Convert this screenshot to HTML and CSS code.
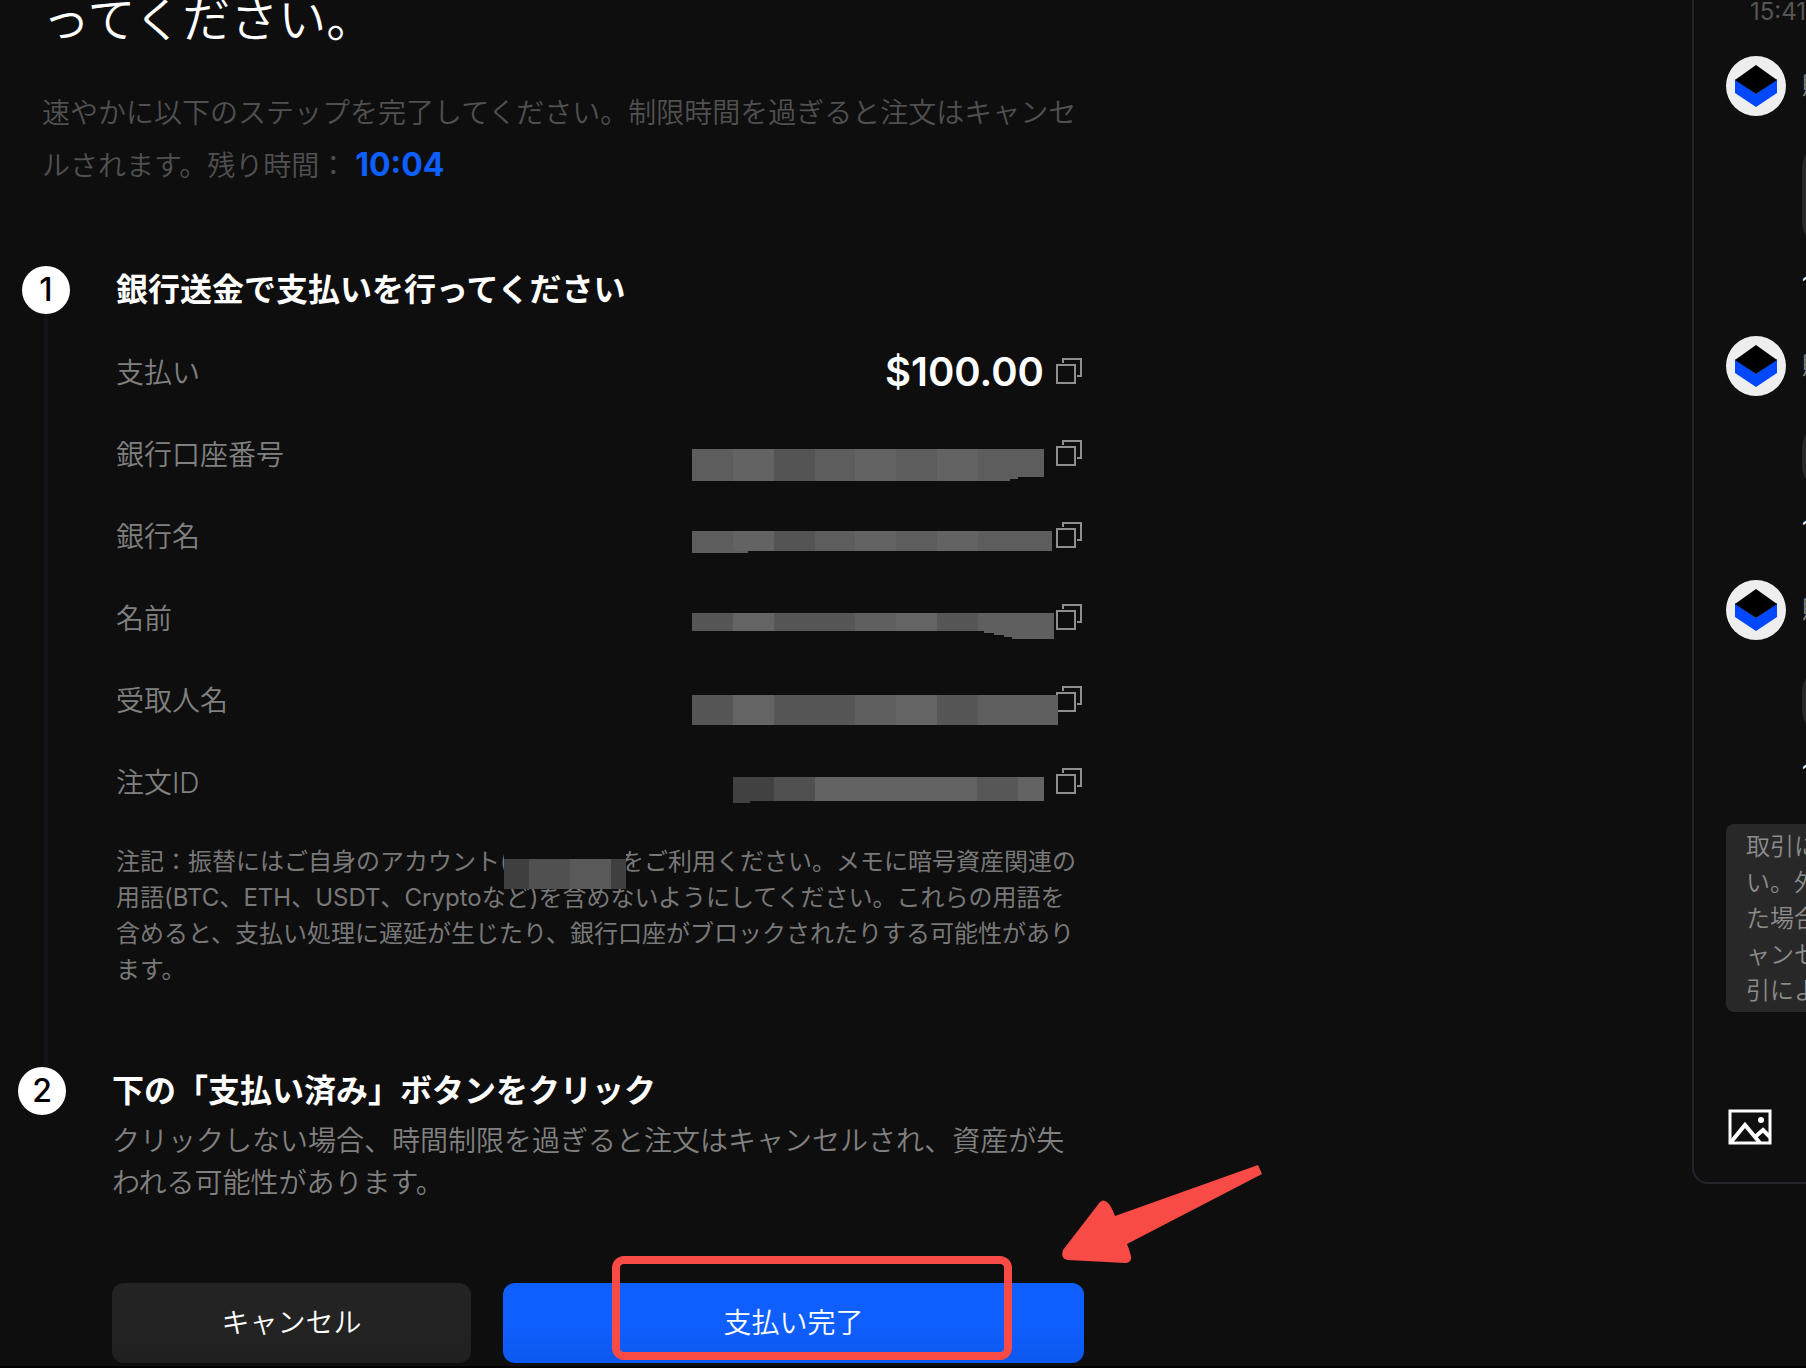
FILE: index.html
```html
<!DOCTYPE html>
<html lang="ja">
<head>
    <meta charset="UTF-8">
    <meta name="viewport" content="width=device-width, initial-scale=1.0">
    <title>注文の支払い</title>
    <link rel="stylesheet" href="styles.css">
</head>
<body>
    <!-- Shared icons -->
    <svg class="sprite" aria-hidden="true">
        <symbol id="icon-copy" viewBox="0 0 26 26">
            <path d="M1 7h18v18H1zM7 5V1h18v17h-4" fill="none" stroke="#8f8f8f" stroke-width="2"/>
        </symbol>
        <symbol id="icon-avatar" viewBox="0 0 60 60">
            <circle cx="30" cy="30" r="30" fill="#eeeeee"/>
            <path d="M9 23l21 15 21-15v14L30 51 9 37z" fill="#0048ff"/>
            <path d="M30 9l21 15-21 14L9 24z" fill="#000"/>
        </symbol>
    </svg>

    <div class="page">
        <main class="order">
            <header class="order-header">
                <h1>ってください。</h1>
                <p>速やかに以下のステップを完了してください。制限時間を過ぎると注文はキャンセルされます。残り時間：<strong class="countdown">10:04</strong></p>
            </header>

            <section class="step step-pay">
                <div class="rail">
                    <span class="badge">1</span>
                    <span class="line"></span>
                </div>
                <div class="step-body">
                    <h2>銀行送金で支払いを行ってください</h2>
                    <dl class="details">
                        <div class="row">
                            <dt>支払い</dt>
                            <dd>
                                <span class="amount">$100.00</span>
                                <button class="copy" type="button" aria-label="支払いをコピー"><svg><use href="#icon-copy"/></svg></button>
                            </dd>
                        </div>
                        <div class="row">
                            <dt>銀行口座番号</dt>
                            <dd>
                                <svg class="mask" viewBox="0 0 352 60">
                                    <path d="M0 26h352v28h-26v2h-8v2H0z" fill="#5d5d5d"/>
                                    <path d="M41 26h41v32H41zM163 26h41v32h-41zM245 26h41v32h-41z" fill="#636363"/>
                                    <path d="M82 26h41v32H82z" fill="#545454"/>
                                </svg>
                                <button class="copy" type="button" aria-label="銀行口座番号をコピー"><svg><use href="#icon-copy"/></svg></button>
                            </dd>
                        </div>
                        <div class="row">
                            <dt>銀行名</dt>
                            <dd>
                                <svg class="mask" viewBox="0 0 352 60">
                                    <path d="M0 26h360v20H56v2H0z" fill="#5d5d5d"/>
                                    <path d="M41 26h41v20H41zM163 26h41v20h-41zM245 26h41v20h-41z" fill="#636363"/>
                                    <path d="M82 26h41v20H82z" fill="#545454"/>
                                </svg>
                                <button class="copy" type="button" aria-label="銀行名をコピー"><svg><use href="#icon-copy"/></svg></button>
                            </dd>
                        </div>
                        <div class="row">
                            <dt>名前</dt>
                            <dd>
                                <svg class="mask" viewBox="0 0 352 60">
                                    <path d="M0 26h362v26h-42v-2h-8v-2h-10v-2h-10v-2H0z" fill="#5f5f5f"/>
                                    <path d="M0 26h41v18H0zM82 26h81v18H82zM245 26h41v18h-41z" fill="#565656"/>
                                    <path d="M41 26h41v18H41zM204 26h41v18h-41z" fill="#646464"/>
                                </svg>
                                <button class="copy" type="button" aria-label="名前をコピー"><svg><use href="#icon-copy"/></svg></button>
                            </dd>
                        </div>
                        <div class="row">
                            <dt>受取人名</dt>
                            <dd>
                                <svg class="mask" viewBox="0 0 352 60">
                                    <path d="M0 26h366v30H0z" fill="#5f5f5f"/>
                                    <path d="M0 26h41v30H0zM82 26h81v30H82zM245 26h41v30h-41z" fill="#565656"/>
                                    <path d="M41 26h41v30H41zM204 26h41v30h-41z" fill="#646464"/>
                                </svg>
                                <button class="copy" type="button" aria-label="受取人名をコピー"><svg><use href="#icon-copy"/></svg></button>
                            </dd>
                        </div>
                        <div class="row">
                            <dt>注文ID</dt>
                            <dd>
                                <svg class="mask" viewBox="0 0 352 60">
                                    <path d="M41 26h311v24H58v2H41z" fill="#636363"/>
                                    <path d="M41 26h41v24H58v2H41z" fill="#414141"/>
                                    <path d="M82 26h41v24H82z" fill="#505050"/>
                                    <path d="M285 26h41v24h-41z" fill="#575757"/>
                                </svg>
                                <button class="copy" type="button" aria-label="注文IDをコピー"><svg><use href="#icon-copy"/></svg></button>
                            </dd>
                        </div>
                    </dl>
                    <p class="note">注記：振替にはご自身のアカウント<span class="hidden-name">(<svg viewBox="0 0 122 44"><path d="M0 0h122v14H0z" fill="#0e0e0e"/><path d="M0 14h122v30H0z" fill="#404040"/><path d="M25 14h82v30H25z" fill="#505050"/><path d="M66 14h41v30H66z" fill="#595959"/></svg></span>をご利用ください。メモに暗号資産関連の用語(BTC、ETH、USDT、Cryptoなど)を含めないようにしてください。これらの用語を含めると、支払い処理に遅延が生じたり、銀行口座がブロックされたりする可能性があります。</p>
                </div>
            </section>

            <section class="step step-confirm">
                <div class="rail">
                    <span class="badge">2</span>
                </div>
                <div class="step-body">
                    <h2>下の「支払い済み」ボタンをクリック</h2>
                    <p class="description">クリックしない場合、時間制限を過ぎると注文はキャンセルされ、資産が失われる可能性があります。</p>
                    <div class="actions">
                        <button class="btn btn-cancel" type="button">キャンセル</button>
                        <div class="primary">
                            <button class="btn btn-done" type="button">支払い完了</button>
                            <span class="highlight"></span>
                            <svg class="arrow" viewBox="0 0 200 98">
                                <path d="M1 85L38 37Q41 34 45 37Q49 40 53 51L196 0L200 9L65 79Q70 92 69 94Q68 98 63 98L6 95Q-2 94 1 85z" fill="#f84b46"/>
                            </svg>
                        </div>
                    </div>
                </div>
            </section>
        </main>

        <aside class="chat">
            <div class="chat-inner">
                <time class="chat-date">15:41</time>

                <article class="message">
                    <svg class="avatar"><use href="#icon-avatar"/></svg>
                    <div class="message-body">
                        <div class="name">販売者</div>
                        <div class="bubble bubble-tall"></div>
                        <time>15:41</time>
                    </div>
                </article>
                <article class="message">
                    <svg class="avatar"><use href="#icon-avatar"/></svg>
                    <div class="message-body">
                        <div class="name">販売者</div>
                        <div class="bubble"></div>
                        <time>15:41</time>
                    </div>
                </article>
                <article class="message">
                    <svg class="avatar"><use href="#icon-avatar"/></svg>
                    <div class="message-body">
                        <div class="name">販売者</div>
                        <div class="bubble"></div>
                        <time>15:41</time>
                    </div>
                </article>

                <p class="notice">取引に<br>い。外<br>た場合<br>ャンセ<br>引によ</p>

                <button class="attach" type="button" aria-label="画像を送信">
                    <svg viewBox="0 0 44 36" fill="none" stroke="#fff" stroke-width="3">
                        <path d="M2 2h40v32H2z"/>
                        <path d="M3 33L17 16l15 18M27 28l8-7 7 7" stroke-width="4"/>
                        <circle cx="33" cy="11" r="3" fill="#fff" stroke="none"/>
                    </svg>
                </button>
            </div>
        </aside>
    </div>
</body>
</html>
```
FILE: styles.css
```css
* {
    margin: 0;
    padding: 0;
    box-sizing: border-box;
}

body {
    font-family: Inter, "Noto Sans CJK JP", sans-serif;
    background: #0e0e0e;
    color: #fff;
    overflow-x: hidden;
}

button {
    font: inherit;
    color: inherit;
    border: none;
    background: none;
    cursor: pointer;
}

.sprite {
    position: absolute;
    width: 0;
    height: 0;
}

.page {
    display: flex;
    justify-content: space-between;
    align-items: flex-start;
    min-height: 100vh;
    border-bottom: 2px solid #000;
}

.order {
    flex: 1;
    max-width: 1084px;
}

/* Header */
.order-header {
    padding-left: 42px;
    margin-bottom: 73px;
}

.order-header h1 {
    font-size: 48px;
    font-weight: 350;
    line-height: 40px;
    margin-bottom: 47px;
}

.order-header p {
    font-size: 28px;
    font-weight: 350;
    line-height: 53px;
    color: #505050;
}

.countdown {
    margin-left: 8px;
    font-size: 32px;
    font-weight: 700;
    line-height: 1;
    color: #0f5fff;
}

/* Steps */
.step {
    display: grid;
    grid-template-columns: 48px minmax(0, 1fr);
    gap: 46px;
}

.step-pay {
    padding: 0 2px 0 22px;
}

.step-pay .step-body {
    padding-bottom: 79px;
}

.step-confirm {
    padding-left: 18px;
}

.rail {
    display: flex;
    flex-direction: column;
    align-items: center;
}

.badge {
    width: 48px;
    height: 48px;
    border-radius: 50%;
    background: #fff;
    color: #000;
    font-size: 32px;
    font-weight: 500;
    line-height: 48px;
    text-align: center;
}

.line {
    flex: 1;
    width: 4px;
    background: #131418;
}

.step h2 {
    font-size: 32px;
    font-weight: 700;
    line-height: 48px;
}

.details {
    margin-top: 16px;
}

.row {
    display: flex;
    justify-content: space-between;
    align-items: center;
    height: 82px;
    font-size: 28px;
    font-weight: 350;
}

.row dt {
    color: #808080;
}

.row dd {
    display: flex;
    align-items: center;
    gap: 12px;
}

.amount {
    font-size: 40px;
    font-weight: 600;
}

.copy,
.copy svg {
    display: block;
    width: 26px;
    height: 26px;
}

/* Pixelated cover over the private values */
.mask {
    position: relative;
    z-index: 1;
    width: 352px;
    height: 60px;
    overflow: visible;
}

.note {
    margin-top: 22px;
    font-size: 24px;
    font-weight: 400;
    line-height: 36px;
    color: #787878;
}

.hidden-name {
    display: inline-block;
    position: relative;
    width: 120px;
}

.hidden-name svg {
    position: absolute;
    top: 1px;
    left: 4px;
    width: 122px;
    height: 44px;
}

.description {
    margin-top: 5px;
    font-size: 28px;
    font-weight: 350;
    line-height: 42px;
    color: #808080;
}

/* Buttons */
.actions {
    display: grid;
    grid-template-columns: 359fr 581fr;
    gap: 32px;
    margin-top: 79px;
}

.btn {
    width: 100%;
    height: 80px;
    padding-bottom: 4px;
    border-radius: 12px;
    font-size: 28px;
    font-weight: 350;
}

.btn-cancel {
    background: linear-gradient(#232323 60%, #1f1f1f);
}

.btn-done {
    background: linear-gradient(#0f5fff 50%, #0d58ee);
}

.primary {
    position: relative;
}

.highlight {
    position: absolute;
    top: -27px;
    left: 109px;
    width: 400px;
    height: 104px;
    border: 8px solid #f84b46;
    border-radius: 12px;
    pointer-events: none;
}

.arrow {
    position: absolute;
    top: -118px;
    left: 559px;
    width: 200px;
    height: 98px;
}

/* Chat */
.chat {
    width: 114px;
    overflow: hidden;
}

.chat-inner {
    width: 480px;
    padding: 0 32px 37px;
    border: 2px solid #23232a;
    border-top: none;
    border-radius: 0 0 16px 16px;
    background: #0f0f0f;
}

.chat time {
    display: block;
    font-size: 24px;
}

.chat .chat-date {
    padding-left: 24px;
    margin-bottom: 32px;
    line-height: 24px;
    color: #555;
}

.message {
    display: grid;
    grid-template-columns: 60px 1fr;
    gap: 16px;
    margin-bottom: 32px;
}

.avatar {
    width: 60px;
    height: 60px;
}

.name {
    font-size: 24px;
    line-height: 60px;
    color: #808080;
}

.bubble {
    height: 66px;
    margin: 28px 0 22px;
    border-radius: 24px;
    background: #282828;
}

.bubble-tall {
    height: 102px;
}

.message time {
    line-height: 36px;
}

.notice {
    padding: 5px 20px 3px;
    border-radius: 8px;
    background: #282828;
    color: #8c8c8c;
    font-size: 24px;
    font-weight: 350;
    line-height: 36px;
}

.attach {
    display: block;
    margin: 97px 0 0 2px;
}

.attach svg {
    display: block;
    width: 44px;
    height: 36px;
}
```
